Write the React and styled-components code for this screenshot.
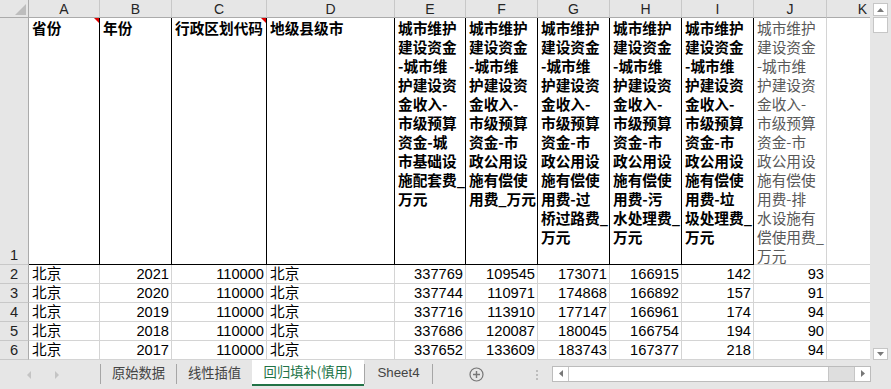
import React from "react";
import styled, { createGlobalStyle } from "styled-components";

const GlobalStyle = createGlobalStyle`
  html, body { margin: 0; padding: 0; background: #fff; }
  body { font-family: "Liberation Sans", "Noto Sans CJK SC", sans-serif; }
`;

const Window = styled.div`
  width: 891px;
  height: 389px;
  overflow: hidden;
  display: grid;
  grid-template-columns: 870px 21px;
  grid-template-rows: 360px 29px;
  background: #e6e6e6;
`;

const Viewport = styled.div`
  overflow: hidden;
  background: #fff;
`;

const Sheet = styled.div`
  display: grid;
  grid-template-columns: 29px 71px 72px 95px 128px 71px 72px 72px 72px 72px 73px 72px;
  grid-template-rows: 18px 247px repeat(5, 19px);
  width: max-content;
  font-family: "Liberation Sans", "Noto Sans CJK SC", sans-serif;
  font-size: 14.67px;
  color: #000;
`;

const Corner = styled.div`
  background: #e6e6e6;
  border-right: 1px solid #ababab;
  border-bottom: 1px solid #ababab;
  box-sizing: border-box;
  display: flex;
  align-items: flex-end;
  justify-content: flex-end;
  padding: 0 2px 2px 0;
`;

const ColHead = styled.div`
  background: #e6e6e6;
  border-right: 1px solid #c8c8c8;
  border-bottom: 1px solid #ababab;
  box-sizing: border-box;
  display: flex;
  align-items: center;
  justify-content: center;
  font-size: 14px;
  color: #262626;
`;

const RowHead = styled.div`
  background: #e6e6e6;
  border-right: 1px solid #ababab;
  border-bottom: 1px solid #c8c8c8;
  box-sizing: border-box;
  display: flex;
  justify-content: center;
  align-items: ${(p) => (p.$bottom ? "flex-end" : "center")};
  padding-bottom: ${(p) => (p.$bottom ? "1px" : "0")};
  font-size: 14.67px;
  color: #222;
`;

const Cell = styled.div`
  background: #fff;
  border-right: 1px solid #d4d4d4;
  border-bottom: 1px solid #d4d4d4;
  box-sizing: border-box;
  display: flex;
  align-items: center;
  justify-content: ${(p) => (p.$num ? "flex-end" : "flex-start")};
  padding: 0 2px 0 3px;
  white-space: nowrap;
  overflow: hidden;
  line-height: 18px;
`;

const HeadCell = styled.div`
  position: relative;
  background: #fff;
  box-shadow: inset -1px -1px 0 ${(p) => (p.$strong ? "#000" : "#d4d4d4")};
  box-sizing: border-box;
  display: flex;
  flex-direction: column;
  align-items: flex-start;
  padding: 0 1px 0 3px;
  white-space: nowrap;
  overflow: hidden;
  line-height: 19px;
  font-family: "Noto Sans CJK SC", "Liberation Sans", sans-serif;
  font-weight: ${(p) => (p.$strong ? 700 : 400)};
  color: ${(p) => (p.$strong ? "#000" : "#595959")};
`;

const CommentMark = styled.span`
  position: absolute;
  top: 0;
  right: 1px;
  width: 0;
  height: 0;
  border-top: 5px solid #e00000;
  border-left: 5px solid transparent;
`;

const VScroll = styled.div`
  background: #e6e6e6;
  display: flex;
  flex-direction: column;
  align-items: center;
  padding-top: 3px;
  box-sizing: border-box;
`;

const ScrollButton = styled.div`
  width: 15px;
  height: ${(p) => p.$h || 13}px;
  box-sizing: border-box;
  background: #fff;
  border: 1px solid #c6c6c6;
  display: flex;
  align-items: center;
  justify-content: center;
  flex: none;
`;

const VThumb = styled.div`
  width: 15px;
  height: 16px;
  margin-top: 1px;
  box-sizing: border-box;
  background: #fff;
  border: 1px solid #c6c6c6;
`;

const Spacer = styled.div`
  flex: 1;
`;

const TabBar = styled.div`
  grid-column: 1 / -1;
  display: flex;
  align-items: stretch;
  background: #e6e6e6;
  font-family: "Noto Sans CJK SC", "Liberation Sans", sans-serif;
  font-size: 13.3px;
`;

const Nav = styled.div`
  width: 100px;
  display: flex;
  align-items: center;
  padding-left: 27px;
  gap: 24px;
  box-sizing: border-box;
`;

const Divider = styled.div`
  width: 1px;
  background: #a6a6a6;
  margin: 4px 0 5px;
  flex: none;
`;

const Tab = styled.div`
  width: ${(p) => p.$w}px;
  flex: none;
  display: flex;
  align-items: center;
  justify-content: center;
  color: #444;
  padding-bottom: 4px;
  box-sizing: border-box;
  font-family: ${(p) =>
    p.$latin ? '"Liberation Sans", sans-serif' : '"Noto Sans CJK SC", sans-serif'};
`;

const ActiveTab = styled.div`
  width: 112px;
  height: 26px;
  flex: none;
  box-sizing: border-box;
  background: #fff;
  border-bottom: 2px solid #217346;
  color: #217346;
  display: flex;
  align-items: center;
  justify-content: center;
  padding-bottom: 1px;
`;

const AddSheet = styled.div`
  margin-left: 36px;
  align-self: center;
  margin-bottom: 1px;
  display: flex;
`;

const Dots = styled.div`
  margin-left: 52px;
  align-self: center;
  width: 2px;
  height: 10px;
  background: repeating-linear-gradient(to bottom, #bdbdbd 0 2px, transparent 2px 4px);
`;

const HScroll = styled.div`
  margin-left: 14px;
  align-self: center;
  margin-top: -2px;
  width: 319px;
  height: 16px;
  box-sizing: border-box;
  border: 1px solid #bcbcbc;
  display: flex;
  background: #dedede;
`;

const HButton = styled.div`
  width: 15px;
  flex: none;
  background: #fff;
  display: flex;
  align-items: center;
  justify-content: center;
  border-${(p) => (p.$side === "left" ? "right" : "left")}: 1px solid #c6c6c6;
`;

const HThumb = styled.div`
  width: 259px;
  flex: none;
  background: #fff;
  border-right: 1px solid #c6c6c6;
`;

const Tri = ({ dir, color = "#7a7a7a", w = 7, h = 4 }) => {
  const pts = {
    up: `0,${h} ${w / 2},0 ${w},${h}`,
    down: `0,0 ${w},0 ${w / 2},${h}`,
    left: `${h},0 ${h},${w} 0,${w / 2}`,
    right: `0,0 0,${w} ${h},${w / 2}`,
  }[dir];
  const vw = dir === "left" || dir === "right" ? h : w;
  const vh = dir === "left" || dir === "right" ? w : h;
  return (
    <svg width={vw} height={vh} viewBox={`0 0 ${vw} ${vh}`}>
      <polygon points={pts} fill={color} />
    </svg>
  );
};

const cols = ["A", "B", "C", "D", "E", "F", "G", "H", "I", "J", "K"];

const base = ["城市维护", "建设资金", "-城市维", "护建设资", "金收入-", "市级预算"];
const pub = ["资金-市", "政公用设", "施有偿使"];

const headers = [
  { lines: ["省份"], strong: true, mark: true },
  { lines: ["年份"], strong: true },
  { lines: ["行政区划代码"], strong: true, mark: true },
  { lines: ["地级县级市"], strong: true },
  { lines: [...base, "资金-城", "市基础设", "施配套费_", "万元"], strong: true },
  { lines: [...base, ...pub, "用费_万元"], strong: true },
  { lines: [...base, ...pub, "用费-过", "桥过路费_", "万元"], strong: true },
  { lines: [...base, ...pub, "用费-污", "水处理费_", "万元"], strong: true },
  { lines: [...base, ...pub, "用费-垃", "圾处理费_", "万元"], strong: true },
  { lines: [...base, ...pub, "用费-排", "水设施有", "偿使用费_", "万元"], strong: false },
  { lines: [], strong: false },
];

const rows = [
  ["北京", 2021, 110000, "北京", 337769, 109545, 173071, 166915, 142, 93],
  ["北京", 2020, 110000, "北京", 337744, 110971, 174868, 166892, 157, 91],
  ["北京", 2019, 110000, "北京", 337716, 113910, 177147, 166961, 174, 94],
  ["北京", 2018, 110000, "北京", 337686, 120087, 180045, 166754, 194, 90],
  ["北京", 2017, 110000, "北京", 337652, 133609, 183743, 167377, 218, 94],
];

export default function App() {
  return (
    <>
      <GlobalStyle />
      <Window>
        <Viewport>
          <Sheet>
            <Corner>
              <svg width="11" height="11" viewBox="0 0 11 11">
                <polygon points="11,0 11,11 0,11" fill="#bdbdbd" />
              </svg>
            </Corner>
            {cols.map((c) => (
              <ColHead key={c}>{c}</ColHead>
            ))}

            <RowHead $bottom>1</RowHead>
            {headers.map((h, i) => (
              <HeadCell key={i} $strong={h.strong}>
                {h.lines.map((l, j) => (
                  <span key={j}>{l}</span>
                ))}
                {h.mark && <CommentMark />}
              </HeadCell>
            ))}

            {rows.map((r, ri) => (
              <React.Fragment key={ri}>
                <RowHead>{ri + 2}</RowHead>
                {r.map((v, ci) => (
                  <Cell key={ci} $num={typeof v === "number"}>
                    {v}
                  </Cell>
                ))}
                <Cell />
              </React.Fragment>
            ))}
          </Sheet>
        </Viewport>

        <VScroll>
          <ScrollButton>
            <Tri dir="up" w={7} h={4} />
          </ScrollButton>
          <VThumb />
          <Spacer />
          <ScrollButton $h={12}>
            <Tri dir="down" w={7} h={4} />
          </ScrollButton>
        </VScroll>

        <TabBar>
          <Nav>
            <Tri dir="left" color="#c4c4c4" w={8} h={4} />
            <Tri dir="right" color="#c4c4c4" w={8} h={4} />
          </Nav>
          <Divider />
          <Tab $w={75}>原始数据</Tab>
          <Divider />
          <Tab $w={75}>线性插值</Tab>
          <ActiveTab>回归填补(慎用)</ActiveTab>
          <Divider />
          <Tab $w={67} $latin>
            Sheet4
          </Tab>
          <Divider />
          <AddSheet>
            <svg width="15" height="15" viewBox="0 0 15 15">
              <circle cx="7.5" cy="7.5" r="6.5" fill="none" stroke="#767676" strokeWidth="1.2" />
              <path d="M7.5 4v7M4 7.5h7" stroke="#767676" strokeWidth="1.4" />
            </svg>
          </AddSheet>
          <Dots />
          <HScroll>
            <HButton $side="left">
              <Tri dir="left" color="#777" w={7} h={4} />
            </HButton>
            <HThumb />
            <Spacer />
            <HButton $side="right">
              <Tri dir="right" color="#777" w={7} h={4} />
            </HButton>
          </HScroll>
        </TabBar>
      </Window>
    </>
  );
}
